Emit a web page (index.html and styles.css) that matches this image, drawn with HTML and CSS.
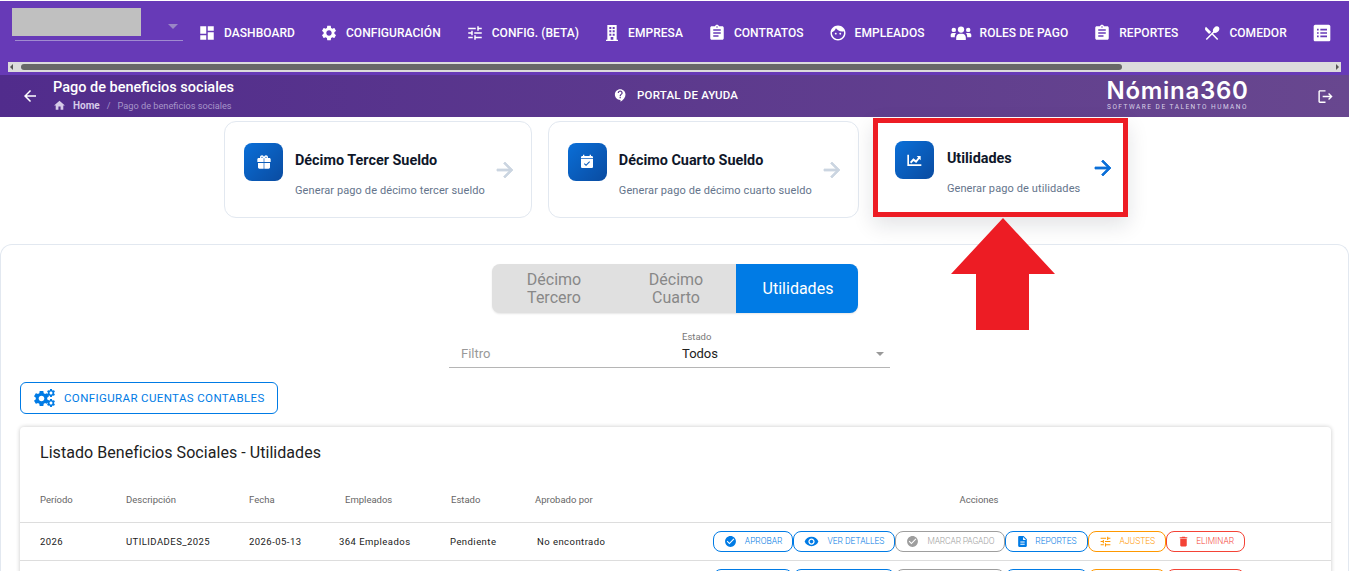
FILE: index.html
```html
<!DOCTYPE html>
<html lang="es">
<head>
    <meta charset="UTF-8">
    <meta name="viewport" content="width=device-width, initial-scale=1.0">
    <title>Pago de beneficios sociales</title>
    <link rel="stylesheet" href="styles.css">
</head>
<body>
    <svg class="icon-defs" width="0" height="0">
        <symbol id="i-dashboard" viewBox="0 0 24 24"><path d="M3 13h8V3H3v10zm0 8h8v-6H3v6zm10 0h8V11h-8v10zm0-18v6h8V3h-8z"/></symbol>
        <symbol id="i-gear" viewBox="0 0 24 24"><path d="M19.14 12.94c.04-.3.06-.61.06-.94 0-.32-.02-.64-.07-.94l2.03-1.58c.18-.14.23-.41.12-.61l-1.92-3.32c-.12-.22-.37-.29-.59-.22l-2.39.96c-.5-.38-1.03-.7-1.62-.94l-.36-2.54c-.04-.24-.24-.41-.48-.41h-3.84c-.24 0-.43.17-.47.41l-.36 2.54c-.59.24-1.13.57-1.62.94l-2.39-.96c-.22-.08-.47 0-.59.22L2.74 8.87c-.12.21-.08.47.12.61l2.03 1.58c-.05.3-.09.63-.09.94s.02.64.07.94l-2.03 1.58c-.18.14-.23.41-.12.61l1.92 3.32c.12.22.37.29.59.22l2.39-.96c.5.38 1.03.7 1.62.94l.36 2.54c.05.24.24.41.48.41h3.84c.24 0 .44-.17.47-.41l.36-2.54c.59-.24 1.13-.56 1.62-.94l2.39.96c.22.08.47 0 .59-.22l1.92-3.32c.12-.22.07-.47-.12-.61l-2.01-1.58zM12 15.6c-1.98 0-3.6-1.62-3.6-3.6s1.62-3.6 3.6-3.6 3.6 1.62 3.6 3.6-1.62 3.6-3.6 3.6z"/></symbol>
        <symbol id="i-tune" viewBox="0 0 24 24"><path d="M3 17v2h6v-2H3zM3 5v2h10V5H3zm10 16v-2h8v-2h-8v-2h-2v6h2zM7 9v2H3v2h4v2h2V9H7zm14 4v-2H11v2h10zm-6-4h2V7h4V5h-4V3h-2v6z"/></symbol>
        <symbol id="i-building" viewBox="0 0 24 24"><path fill-rule="evenodd" d="M5 0h14v22h2v2H3v-2h2zM8 3v3h3V3zm5 0v3h3V3zM8 8v3h3V8zm5 0v3h3V8zM8 13v3h3v-3zm5 0v3h3v-3zm-3 5v4h4v-4z"/></symbol>
        <symbol id="i-clipboard" viewBox="0 0 24 24"><path d="M19 3h-4.18C14.4 1.84 13.3 1 12 1c-1.3 0-2.4.84-2.82 2H5c-1.1 0-2 .9-2 2v14c0 1.1.9 2 2 2h14c1.1 0 2-.9 2-2V5c0-1.1-.9-2-2-2zm-7 0c.55 0 1 .45 1 1s-.45 1-1 1-1-.45-1-1 .45-1 1-1zm2 14H7v-2h7v2zm3-4H7v-2h10v2zm0-4H7V7h10v2z"/></symbol>
        <symbol id="i-face" viewBox="0 0 24 24"><path d="M12 2C6.480 2 2 6.480 2 12s4.480 10 10 10 10-4.480 10-10S17.520 2 12 2zM9 14.250c-.69 0-1.250-.56-1.250-1.250s.56-1.250 1.250-1.250 1.250.56 1.250 1.250-.56 1.250-1.250 1.250zm6 0c-.69 0-1.250-.56-1.250-1.250s.56-1.250 1.250-1.250 1.250.56 1.250 1.250-.56 1.250-1.250 1.250zM9.260 5.770C11.070 8.330 14.050 10 17.420 10c.78 0 1.530-.09 2.250-.26.210.71.330 1.470.330 2.260 0 4.410-3.590 8-8 8s-8-3.590-8-8c0-.29.020-.58.050-.86 2.360-1.050 4.230-2.980 5.210-5.370z" fill-rule="evenodd"/></symbol>
        <symbol id="i-users" viewBox="0 0 32 24"><circle cx="16" cy="7" r="4.600"/><circle cx="5.500" cy="7.500" r="3.200"/><circle cx="26.500" cy="7.500" r="3.200"/><path d="M9 22v-3.500C9 15 11.500 13 14 13h4c2.500 0 5 2 5 5.500V22zM1 17v-2c0-1.700 1.300-3 3-3h3c.700 0 1.300.200 1.800.500C7.300 14 7 16 7 18H2c-.500 0-1-.400-1-1zM31 17v-2c0-1.700-1.300-3-3-3h-3c-.700 0-1.300.200-1.800.500C24.700 14 25 16 25 18h5c.500 0 1-.400 1-1z"/></symbol>
        <symbol id="i-cutlery" viewBox="0 0 24 24"><path d="M8.100 13.340l2.830-2.830L3.910 3.500c-1.560 1.560-1.560 4.090 0 5.660l4.190 4.180zm6.780-1.810c1.530.710 3.680.210 5.270-1.380 1.910-1.910 2.280-4.650.810-6.120-1.460-1.460-4.200-1.100-6.120.810-1.590 1.590-2.090 3.740-1.380 5.270L3.700 19.870l1.410 1.410L12 14.410l6.880 6.880 1.410-1.410L13.410 13l1.470-1.470z"/></symbol>
        <symbol id="i-list" viewBox="0 0 24 24"><path fill-rule="evenodd" d="M4 2h16c1.100 0 2 .9 2 2v16c0 1.100-.9 2-2 2H4c-1.100 0-2-.9-2-2V4c0-1.100.9-2 2-2zm2 5v2h2V7zm4 0v2h8V7zm-4 4v2h2v-2zm4 0v2h8v-2zm-4 4v2h2v-2zm4 0v2h8v-2z"/></symbol>
        <symbol id="i-back" viewBox="0 0 24 24"><path d="M20 11H7.830l5.590-5.590L12 4l-8 8 8 8 1.410-1.410L7.830 13H20v-2z"/></symbol>
        <symbol id="i-forward" viewBox="0 0 24 24"><path d="M12 4l-1.410 1.410L16.170 11H4v2h12.170l-5.580 5.590L12 20l8-8z"/></symbol>
        <symbol id="i-home" viewBox="0 0 24 24"><path d="M10 20v-6h4v6h5v-8h3L12 3 2 12h3v8z"/></symbol>
        <symbol id="i-help" viewBox="0 0 24 24"><path d="M11.500 2C6.810 2 3 5.810 3 10.500S6.810 19 11.500 19h.5v3c4.860-2.340 8-7 8-11.500C20 5.810 16.190 2 11.500 2zm1 14.500h-2v-2h2v2zm0-3.500h-2c0-3.250 3-3 3-5 0-1.100-.9-2-2-2s-2 .9-2 2h-2c0-2.210 1.790-4 4-4s4 1.790 4 4c0 2.500-3 2.750-3 5z"/></symbol>
        <symbol id="i-logout" viewBox="0 0 24 24"><path d="M17 7l-1.410 1.410L18.170 11H8v2h10.170l-2.580 2.580L17 17l5-5zM4 5h8V3H4c-1.100 0-2 .9-2 2v14c0 1.100.9 2 2 2h8v-2H4V5z"/></symbol>
        <symbol id="i-gift" viewBox="0 0 24 24"><path fill-rule="evenodd" d="M20 6h-2.180c.110-.310.180-.650.180-1 0-1.660-1.340-3-3-3-1.050 0-1.960.540-2.500 1.350L12 4.020l-.5-.670C10.960 2.540 10.050 2 9 2 7.340 2 6 3.340 6 5c0 .350.070.690.180 1H4c-1.110 0-2 .890-2 2v4h9.500V6.500h1V12H22V8c0-1.110-.890-2-2-2zM9 4a1 1 0 100 2 1 1 0 000-2zm6 0a1 1 0 100 2 1 1 0 000-2zM3 13.500h8.500V22H5c-1.100 0-2-.9-2-2zm9.500 0H21V20c0 1.100-.9 2-2 2h-6.500z"/></symbol>
        <symbol id="i-calendar" viewBox="0 0 24 24"><path fill-rule="evenodd" d="M19 3h-1V1h-2v2H8V1H6v2H5c-1.100 0-2 .9-2 2v14c0 1.100.9 2 2 2h14c1.100 0 2-.9 2-2V5c0-1.100-.9-2-2-2zM3 7.500h18v-1H3zM10.590 18l-3.180-3.180 1.060-1.060 2.120 2.120 4.880-4.880 1.060 1.060z"/></symbol>
        <symbol id="i-chart" viewBox="0 0 24 24"><path d="M2 4h2.500v14.500H23V21H2zM6 15l5-5.500 4 3 3.200-4.200L16 6h6v6.500l-2-2.100-4.700 6-4-3-3.500 3.800z"/></symbol>
        <symbol id="i-check" viewBox="0 0 24 24"><path d="M12 2C6.480 2 2 6.480 2 12s4.480 10 10 10 10-4.480 10-10S17.520 2 12 2zm-2 15l-5-5 1.410-1.410L10 14.170l7.590-7.590L19 8l-9 9z"/></symbol>
        <symbol id="i-eye" viewBox="0 0 24 24"><path d="M12 4.500C7 4.500 2.730 7.610 1 12c1.730 4.390 6 7.500 11 7.500s9.270-3.110 11-7.500c-1.730-4.390-6-7.500-11-7.500zM12 17c-2.760 0-5-2.240-5-5s2.240-5 5-5 5 2.240 5 5-2.240 5-5 5zm0-8c-1.660 0-3 1.340-3 3s1.340 3 3 3 3-1.340 3-3-1.340-3-3-3z"/></symbol>
        <symbol id="i-doc" viewBox="0 0 24 24"><path d="M14 2H6c-1.100 0-1.990.9-1.990 2L4 20c0 1.100.890 2 1.990 2H18c1.100 0 2-.9 2-2V8l-6-6zm2 16H8v-2h8v2zm0-4H8v-2h8v2zm-3-5V3.500L18.500 9H13z"/></symbol>
        <symbol id="i-trash" viewBox="0 0 24 24"><path d="M6 19c0 1.100.9 2 2 2h8c1.100 0 2-.9 2-2V7H6v12zM19 4h-3.500l-1-1h-5l-1 1H5v2h14V4z"/></symbol>
    </svg>

    <header class="topbar">
        <div class="nav-row">
            <div class="company-select">
                <div class="company-logo"></div>
                <span class="select-caret"></span>
            </div>
            <nav class="nav-items">
                <a class="nav-item"><svg class="nav-icon"><use href="#i-dashboard"/></svg>DASHBOARD</a>
                <a class="nav-item"><svg class="nav-icon"><use href="#i-gear"/></svg>CONFIGURACIÓN</a>
                <a class="nav-item"><svg class="nav-icon"><use href="#i-tune"/></svg>CONFIG. (BETA)</a>
                <a class="nav-item"><svg class="nav-icon nav-icon-narrow"><use href="#i-building"/></svg>EMPRESA</a>
                <a class="nav-item"><svg class="nav-icon"><use href="#i-clipboard"/></svg>CONTRATOS</a>
                <a class="nav-item"><svg class="nav-icon"><use href="#i-face"/></svg>EMPLEADOS</a>
                <a class="nav-item"><svg class="nav-icon nav-icon-wide"><use href="#i-users"/></svg>ROLES DE PAGO</a>
                <a class="nav-item"><svg class="nav-icon"><use href="#i-clipboard"/></svg>REPORTES</a>
                <a class="nav-item"><svg class="nav-icon"><use href="#i-cutlery"/></svg>COMEDOR</a>
                <a class="nav-item"><svg class="nav-icon nav-icon-big"><use href="#i-list"/></svg></a>
            </nav>
        </div>
        <div class="nav-scroll">
            <span class="scroll-arrow scroll-left"></span>
            <div class="scroll-track"><div class="scroll-thumb"></div></div>
            <span class="scroll-arrow scroll-right"></span>
        </div>
    </header>

    <div class="subheader">
        <svg class="back-icon"><use href="#i-back"/></svg>
        <div class="page-title">
            <h1>Pago de beneficios sociales</h1>
            <div class="breadcrumb">
                <svg class="home-icon"><use href="#i-home"/></svg>
                <span class="crumb-home">Home</span>
                <span class="crumb-sep">/</span>
                <span class="crumb-current">Pago de beneficios sociales</span>
            </div>
        </div>
        <a class="help-link"><svg class="help-icon"><use href="#i-help"/></svg>PORTAL DE AYUDA</a>
        <div class="brand">
            <div class="brand-name">Nómina360</div>
            <div class="brand-tag">SOFTWARE DE TALENTO HUMANO</div>
        </div>
        <svg class="logout-icon"><use href="#i-logout"/></svg>
    </div>

    <section class="cards">
        <a class="card">
            <span class="card-icon"><svg><use href="#i-gift"/></svg></span>
            <div class="card-text">
                <h3>Décimo Tercer Sueldo</h3>
                <p>Generar pago de décimo tercer sueldo</p>
            </div>
            <svg class="card-arrow"><use href="#i-forward"/></svg>
        </a>
        <a class="card">
            <span class="card-icon"><svg><use href="#i-calendar"/></svg></span>
            <div class="card-text">
                <h3>Décimo Cuarto Sueldo</h3>
                <p>Generar pago de décimo cuarto sueldo</p>
            </div>
            <svg class="card-arrow"><use href="#i-forward"/></svg>
        </a>
        <a class="card card-active">
            <span class="card-icon"><svg><use href="#i-chart"/></svg></span>
            <div class="card-text">
                <h3>Utilidades</h3>
                <p>Generar pago de utilidades</p>
            </div>
            <svg class="card-arrow"><use href="#i-forward"/></svg>
        </a>
    </section>

    <!-- flecha roja de la captura -->
    <svg class="red-arrow" width="104" height="112" viewBox="0 0 104 112"><path d="M52 0L104 56H78V112H25V56H0z"/></svg>

    <main class="panel">
        <div class="toggle-group">
            <button class="toggle-btn">Décimo Tercero</button>
            <button class="toggle-btn">Décimo Cuarto</button>
            <button class="toggle-btn toggle-on">Utilidades</button>
        </div>

        <div class="filters">
            <div class="filter-text">Filtro</div>
            <div class="filter-select">
                <label>Estado</label>
                <div class="filter-value">Todos<span class="select-caret caret-grey"></span></div>
            </div>
        </div>

        <button class="config-btn">
            <span class="cogs">
                <svg class="cog-big"><use href="#i-gear"/></svg>
                <svg class="cog-small cog-top"><use href="#i-gear"/></svg>
                <svg class="cog-small cog-bottom"><use href="#i-gear"/></svg>
            </span>
            CONFIGURAR CUENTAS CONTABLES
        </button>

        <div class="table-card">
            <h2>Listado Beneficios Sociales - Utilidades</h2>
            <table>
                <colgroup>
                    <col class="col-period"><col class="col-desc"><col class="col-date"><col class="col-emp"><col class="col-state"><col class="col-appr"><col class="col-actions">
                </colgroup>
                <thead>
                    <tr>
                        <th>Período</th>
                        <th>Descripción</th>
                        <th>Fecha</th>
                        <th class="th-emp">Empleados</th>
                        <th class="th-state">Estado</th>
                        <th>Aprobado por</th>
                        <th class="th-actions">Acciones</th>
                    </tr>
                </thead>
                <tbody>
                    <tr>
                        <td>2026</td>
                        <td>UTILIDADES_2025</td>
                        <td>2026-05-13</td>
                        <td>364 Empleados</td>
                        <td>Pendiente</td>
                        <td class="td-appr">No encontrado</td>
                        <td>
                            <div class="actions">
                                <button class="act act-blue"><svg><use href="#i-check"/></svg>APROBAR</button>
                                <button class="act act-blue act-eye"><svg><use href="#i-eye"/></svg>VER DETALLES</button>
                                <button class="act act-grey"><svg><use href="#i-check"/></svg>MARCAR PAGADO</button>
                                <button class="act act-blue act-doc"><svg><use href="#i-doc"/></svg>REPORTES</button>
                                <button class="act act-orange"><svg><use href="#i-tune"/></svg>AJUSTES</button>
                                <button class="act act-red"><svg><use href="#i-trash"/></svg>ELIMINAR</button>
                            </div>
                        </td>
                    </tr>
                    <tr>
                        <td></td><td></td><td></td><td></td><td></td><td></td>
                        <td>
                            <div class="actions">
                                <button class="act act-blue"><svg><use href="#i-check"/></svg>APROBAR</button>
                                <button class="act act-blue act-eye"><svg><use href="#i-eye"/></svg>VER DETALLES</button>
                                <button class="act act-grey"><svg><use href="#i-check"/></svg>MARCAR PAGADO</button>
                                <button class="act act-blue act-doc"><svg><use href="#i-doc"/></svg>REPORTES</button>
                                <button class="act act-orange"><svg><use href="#i-tune"/></svg>AJUSTES</button>
                                <button class="act act-red"><svg><use href="#i-trash"/></svg>ELIMINAR</button>
                            </div>
                        </td>
                    </tr>
                </tbody>
            </table>
        </div>
    </main>
</body>
</html>
```

FILE: styles.css
```css
* {
    margin: 0;
    padding: 0;
    box-sizing: border-box;
}

html, body {
    height: 100%;
    overflow: hidden;
}

body {
    font-family: 'Roboto', 'Liberation Sans', sans-serif;
    background: white;
    color: #212121;
    position: relative;
    padding-top: 1px;
}

svg {
    fill: currentColor;
    flex-shrink: 0;
}

.icon-defs {
    position: absolute;
}

button {
    font-family: inherit;
    background: none;
    border: none;
}

/* barra superior */
.topbar {
    background: #673ab7;
    height: 74px;
    color: white;
}

.nav-row {
    display: flex;
    height: 61px;
    overflow: hidden;
}

.company-select {
    width: 171px;
    height: 40px;
    margin: 0 0 0 12px;
    padding-top: 7px;
    position: relative;
    flex-shrink: 0;
}

.company-select::after {
    content: '';
    position: absolute;
    left: 3px;
    right: 0;
    bottom: 0;
    height: 1px;
    background: #a08bd0;
}

.company-logo {
    width: 129px;
    height: 28px;
    background: #c0c0c0;
}

.select-caret {
    position: absolute;
    right: 5px;
    top: 23px;
    border-left: 5px solid transparent;
    border-right: 5px solid transparent;
    border-top: 5px solid #9a86c6;
}

.nav-items {
    display: flex;
    align-items: flex-start;
    gap: 25px;
    margin-left: 15px;
    padding-top: 23px;
}

.nav-item {
    display: flex;
    align-items: center;
    gap: 8px;
    height: 17px;
    font-size: 12px;
    font-weight: 500;
    letter-spacing: 0.05px;
    white-space: nowrap;
}

.nav-icon {
    width: 18px;
    height: 18px;
}

.nav-icon-narrow {
    width: 16px;
}

.nav-icon-wide {
    width: 22px;
    height: 18px;
}

.nav-icon-big {
    width: 20px;
    height: 20px;
}

.nav-scroll {
    display: flex;
    align-items: center;
    height: 10px;
    margin: 0 8px;
    padding: 0 2px;
    background: #dcdcdc;
}

.scroll-arrow {
    border-top: 3px solid transparent;
    border-bottom: 3px solid transparent;
    flex-shrink: 0;
}

.scroll-left {
    border-right: 3px solid #555;
}

.scroll-right {
    border-left: 3px solid #555;
}

.scroll-track {
    flex: 1;
    padding: 0 5px 0 8px;
}

.scroll-thumb {
    width: 1101px;
    height: 6px;
    border-radius: 3px;
    background: #686868;
}

/* cabecera de pagina */
.subheader {
    display: flex;
    align-items: center;
    height: 42px;
    padding-left: 21px;
    color: white;
    background: linear-gradient(90deg, #512c8c 0%, #68478f 100%);
}

.back-icon {
    width: 18px;
    height: 18px;
}

.page-title {
    width: 560px;
    margin-left: 14px;
    margin-top: -1px;
}

.page-title h1 {
    font-size: 14.5px;
    font-weight: 500;
    line-height: 17px;
}

.breadcrumb {
    display: flex;
    align-items: center;
    height: 13px;
    margin-top: 3px;
    font-size: 9.2px;
    color: #a795c9;
}

.home-icon {
    width: 13px;
    height: 13px;
    margin-right: 7px;
    color: #d6cbe8;
}

.crumb-home {
    font-weight: 700;
    font-size: 10px;
    color: #d6cbe8;
}

.crumb-sep {
    margin: 0 7px;
}

.help-link {
    display: flex;
    align-items: center;
    gap: 9px;
    width: 493px;
    margin-top: -2px;
    font-size: 11.5px;
    font-weight: 500;
    letter-spacing: 0.2px;
}

.help-icon {
    width: 15px;
    height: 15px;
}

.brand {
    width: 143px;
    text-align: center;
    margin-top: -2px;
}

.brand-name {
    font-family: 'Inter', sans-serif;
    font-size: 24px;
    font-weight: 600;
    line-height: 24px;
    letter-spacing: 0.7px;
}

.brand-tag {
    font-size: 6.5px;
    line-height: 9px;
    letter-spacing: 1.5px;
    color: #d8d0e6;
    white-space: nowrap;
}

.logout-icon {
    width: 17px;
    height: 17px;
    margin-left: 68px;
}

/* tarjetas */
.cards {
    display: flex;
    align-items: flex-start;
    padding: 4px 0 0 224px;
    height: 127px;
}

.card {
    display: flex;
    align-items: center;
    height: 97px;
    padding: 0 14px 0 19px;
    background: white;
    border: 1px solid #e2e8f0;
    border-radius: 12px;
    margin-right: 16px;
}

.card-icon {
    display: flex;
    align-items: center;
    justify-content: center;
    width: 39px;
    height: 38px;
    margin-top: -15px;
    border-radius: 8px;
    color: white;
    background: linear-gradient(135deg, #0a6fd8 0%, #0a4ba0 100%);
}

.card-icon svg {
    width: 16px;
    height: 16px;
}

.card-text {
    margin: 10px 8px 0 12px;
}

.card-text h3 {
    font-size: 14.4px;
    font-weight: 700;
    line-height: 18px;
    color: #0f172a;
    margin-bottom: 13px;
}

.card-text p {
    font-size: 11px;
    line-height: 15px;
    letter-spacing: 0.1px;
    color: #64748b;
}

.card-arrow {
    width: 24px;
    height: 24px;
    color: #cbd5e1;
    stroke: currentColor;
    stroke-width: 0.8;
}

.card-active {
    height: 99px;
    margin: -3px 0 0 -2px;
    padding: 0 8px 0 17px;
    border: 5px solid #ed1c24;
    border-radius: 0;
    box-shadow: 0 8px 20px rgba(15, 23, 42, 0.12);
    position: relative;
    z-index: 1;
}

.card-active .card-text {
    margin: 11px 11px 0 13px;
}

.card-active .card-arrow {
    color: #0a6fd8;
}

.red-arrow {
    position: absolute;
    left: 951px;
    top: 218px;
    z-index: 2;
    fill: #ed1c24;
}

/* panel principal */
.panel {
    border: 1px solid #e2e8f0;
    border-bottom: none;
    border-radius: 12px 12px 0 0;
    padding: 19px 17px 0 19px;
    min-height: 400px;
}

.toggle-group {
    display: flex;
    width: 366px;
    height: 49px;
    margin-left: 472px;
    border-radius: 8px;
    overflow: hidden;
    background: #e0e0e0;
    box-shadow: 0 1px 2px rgba(0, 0, 0, 0.1);
}

.toggle-btn {
    width: 122px;
    padding: 0 29px 0 31px;
    font-size: 16px;
    line-height: 18px;
    color: #888;
}

.toggle-on {
    padding: 0 0 0 2px;
    color: white;
    background: #007be5;
}

.filters {
    display: flex;
    width: 441px;
    height: 38px;
    margin: 17px 0 0 429px;
    padding-left: 12px;
    border-bottom: 1px solid #b5b5b5;
}

.filter-text {
    width: 221px;
    padding-top: 16px;
    font-size: 13px;
    color: #999;
}

.filter-select {
    flex: 1;
    padding-top: 1px;
}

.filter-select label {
    display: block;
    font-size: 9.5px;
    line-height: 12px;
    color: #777;
}

.filter-value {
    font-size: 13px;
    line-height: 17px;
    margin-top: 2px;
    position: relative;
}

.caret-grey {
    top: 7px;
    right: 6px;
    border-top: 4px solid #999;
    border-left-width: 4px;
    border-right-width: 4px;
}

.config-btn {
    display: flex;
    align-items: center;
    gap: 9px;
    width: 258px;
    height: 32px;
    margin-top: 14px;
    padding-left: 13px;
    border: 1px solid #007be5;
    border-radius: 6px;
    color: #007be5;
    font-size: 11.5px;
    font-weight: 400;
    letter-spacing: 0.38px;
    white-space: nowrap;
}

.cogs {
    position: relative;
    width: 21px;
    height: 18px;
    flex-shrink: 0;
}

.cog-big {
    position: absolute;
    left: -2px;
    top: 0;
    width: 19px;
    height: 19px;
}

.cog-small {
    position: absolute;
    right: -1px;
    width: 10px;
    height: 10px;
}

.cog-top {
    top: -1px;
}

.cog-bottom {
    bottom: -1px;
}

/* tabla */
.table-card {
    margin-top: 13px;
    background: white;
    box-shadow: 0 0 4px rgba(0, 0, 0, 0.22);
    border-radius: 4px 4px 0 0;
}

.table-card h2 {
    font-size: 16px;
    font-weight: 400;
    line-height: 20px;
    letter-spacing: 0.05px;
    padding: 16px 20px 0;
    height: 49px;
    color: #212121;
}

table {
    width: 100%;
    table-layout: fixed;
    border-collapse: collapse;
}

.col-period { width: 106px; }
.col-desc { width: 123px; }
.col-date { width: 90px; }
.col-emp { width: 111px; }
.col-state { width: 85px; }
.col-appr { width: 92px; }

th {
    height: 46px;
    padding-top: 2px;
    font-size: 9.5px;
    font-weight: 400;
    text-align: left;
    color: #666;
    border-bottom: 1px solid #ddd;
}

td {
    height: 38px;
    font-size: 9.5px;
    letter-spacing: 0.45px;
    color: #212121;
    border-bottom: 1px solid #ddd;
    white-space: nowrap;
}

th:first-child, td:first-child {
    padding-left: 20px;
}

.th-emp {
    padding-left: 6px;
}

.th-state {
    padding-left: 1px;
}

.th-actions {
    text-align: center;
}

.td-appr {
    padding-left: 2px;
}

.actions {
    display: flex;
    justify-content: center;
}

.act {
    display: flex;
    align-items: center;
    gap: 8px;
    height: 21px;
    padding: 0 10px;
    border: 1px solid currentColor;
    border-radius: 8px;
    font-size: 8.5px;
    font-weight: 300;
    white-space: nowrap;
}

.act svg {
    width: 13px;
    height: 13px;
}

.act-eye svg {
    width: 15px;
    height: 15px;
}

.act-doc, .act-red {
    gap: 6px;
}

.act-blue { color: #007be5; }
.act-grey { color: #9e9e9e; letter-spacing: -0.15px; }
.act-orange { color: #ff9800; }
.act-red { color: #f44336; }
```
